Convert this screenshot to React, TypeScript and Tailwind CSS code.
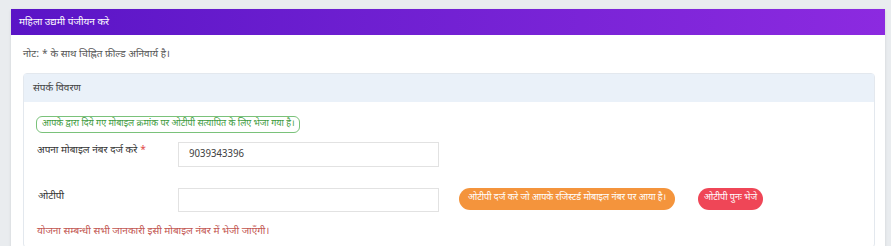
export default function App() {
  const font = { fontFamily: '"Noto Sans Devanagari", "Noto Sans", "Liberation Sans", sans-serif' };

  return (
    <div className="min-h-[246px] bg-[#e9ecef] pl-[11px] pr-[6px] pt-[9px]" style={font}>
      <div className="bg-white shadow-sm">
        <div className="flex h-[26px] items-center bg-gradient-to-r from-[#5a14c6] to-[#8c2ae0] px-2 text-[10px] text-white">
          महिला उद्यमी पंजीयन करे
        </div>

        <div className="pl-[12px] pr-[10px]">
          <p className="flex h-[38px] items-center text-[10px] text-[#555]">
            नोट: * के साथ चिह्नित फ़ील्ड अनिवार्य है।
          </p>

          <div className="rounded-sm border border-[#e3e8ee]">
            <div className="flex h-[28px] items-center bg-[#eaf1f9] px-[9px] text-[10px] text-[#444]">
              संपर्क विवरण
            </div>

            <div className="px-[12px] pb-[8px] pt-[9px]">
              <div className="inline-flex h-[17px] items-center rounded-md border border-[#7ac27a] px-[5px] text-[9px] text-[#3c9a3c]">
                आपके द्वारा दिये गए मोबाइल क्रमांक पर ओटीपी सत्यापित के लिए भेजा गया है।
              </div>

              <div className="mt-[7px] flex">
                <label className="w-[142px] pl-[1px] pt-[1px] text-[10px] text-[#333]">
                  अपना मोबाइल नंबर दर्ज करे <span className="text-[#e04040]">*</span>
                </label>
                <input
                  readOnly
                  value="9039343396"
                  className="h-[25px] w-[261px] border border-[#e2e2e2] px-[10px] text-[10px] text-[#444] outline-none"
                  style={font}
                />
              </div>

              <div className="mt-[21px] flex items-start">
                <label className="w-[142px] pl-[2px] pt-[1px] text-[10px] text-[#333]">ओटीपी</label>
                <input
                  readOnly
                  value=""
                  className="h-[24px] w-[261px] border border-[#e2e2e2] px-[10px] text-[10px] outline-none"
                />
                <span className="ml-[20px] inline-flex h-[22px] items-center rounded-full bg-[#f4943c] px-[9px] text-[9px] text-white">
                  ओटीपी दर्ज करे जो आपके रजिस्टर्ड मोबाइल नंबर पर आया है।
                </span>
                <span className="ml-[23px] inline-flex h-[22px] items-center rounded-full bg-[#ef4657] px-[6px] text-[9px] text-white">
                  ओटीपी पुनः भेजे
                </span>
              </div>

              <p className="mt-[12px] pl-[1px] text-[10px] text-[#c25450]">
                योजना सम्बन्धी सभी जानकारी इसी मोबाइल नंबर में भेजी जाएँगी।
              </p>
            </div>
          </div>
        </div>
      </div>
    </div>
  );
}
